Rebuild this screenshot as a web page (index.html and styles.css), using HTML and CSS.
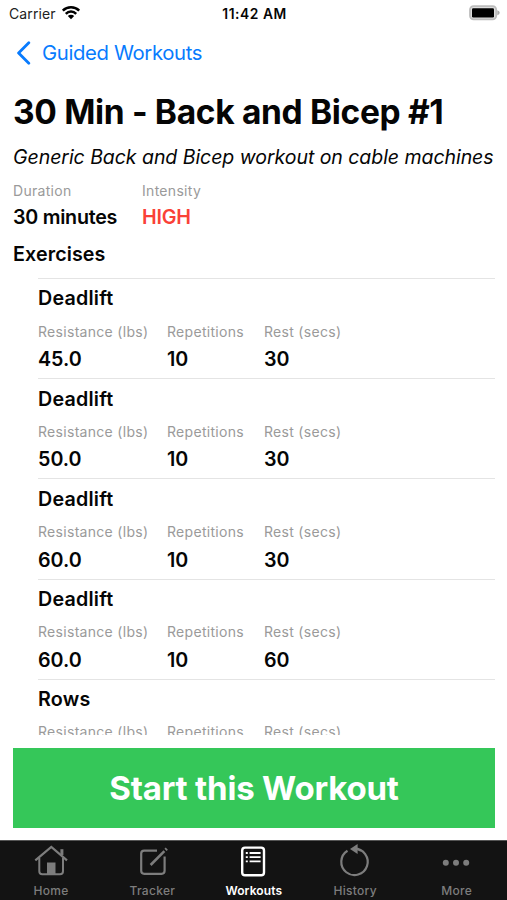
FILE: index.html
```html
<!DOCTYPE html>
<html lang="en">
<head>
<meta charset="utf-8">
<title>Guided Workouts</title>
<link rel="stylesheet" href="styles.css">
</head>
<body>
<div class="app">
  <header class="status">
    <div class="carrier"><span>Carrier</span>
      <svg width="20" height="15" viewBox="0 0 20 15"><g fill="none" stroke="#000" stroke-width="2.5"><path d="M1.8 5.6a11.6 11.6 0 0 1 16.4 0"/><path d="M4.8 8.8a7.3 7.3 0 0 1 10.4 0"/></g><path d="M10 14.2 6.8 11a4.5 4.5 0 0 1 6.4 0z"/></svg>
    </div>
    <div class="time">11:42 AM</div>
    <svg class="battery" width="31" height="16" viewBox="0 0 31 16"><rect x="1" y="1.2" width="26.2" height="13.2" rx="3.6" fill="#ddd" stroke="#bdbdbd" stroke-width="1.8"/><path d="M28.3 5.3q2.4.8 2.4 2.5t-2.4 2.5z" fill="#aaa"/><rect x="3" y="3.2" width="22" height="9.2" rx="1.2"/></svg>
  </header>
  <nav class="nav">
    <svg width="15" height="24" viewBox="0 0 15 24"><path d="M12.8 1.8 2.6 12l10.2 10.2" fill="none" stroke="#087bfe" stroke-width="2.8" stroke-linecap="round" stroke-linejoin="round"/></svg>
    <a class="back">Guided Workouts</a>
  </nav>
  <main class="content">
    <h1>30 Min - Back and Bicep #1</h1>
    <p class="subtitle">Generic Back and Bicep workout on cable machines</p>
    <div class="facts">
      <div class="duration"><div class="label">Duration</div><div class="value minutes">30 minutes</div></div>
      <div><div class="label">Intensity</div><div class="value high">HIGH</div></div>
    </div>
    <h2>Exercises</h2>
    <div class="list">
      <section class="exercise"><h3>Deadlift</h3><div class="stats">
        <div><div class="label">Resistance (lbs)</div><div class="value">45.0</div></div>
        <div><div class="label">Repetitions</div><div class="value">10</div></div>
        <div><div class="label">Rest (secs)</div><div class="value">30</div></div></div></section>
      <section class="exercise"><h3>Deadlift</h3><div class="stats">
        <div><div class="label">Resistance (lbs)</div><div class="value">50.0</div></div>
        <div><div class="label">Repetitions</div><div class="value">10</div></div>
        <div><div class="label">Rest (secs)</div><div class="value">30</div></div></div></section>
      <section class="exercise"><h3>Deadlift</h3><div class="stats">
        <div><div class="label">Resistance (lbs)</div><div class="value">60.0</div></div>
        <div><div class="label">Repetitions</div><div class="value">10</div></div>
        <div><div class="label">Rest (secs)</div><div class="value">30</div></div></div></section>
      <section class="exercise"><h3>Deadlift</h3><div class="stats">
        <div><div class="label">Resistance (lbs)</div><div class="value">60.0</div></div>
        <div><div class="label">Repetitions</div><div class="value">10</div></div>
        <div><div class="label">Rest (secs)</div><div class="value">60</div></div></div></section>
      <section class="exercise"><h3 class="rows">Rows</h3><div class="stats">
        <div><div class="label">Resistance (lbs)</div></div>
        <div><div class="label">Repetitions</div></div>
        <div><div class="label">Rest (secs)</div></div></div></section>
    </div>
  </main>
  <button class="start">Start this Workout</button>
  <footer class="tabs">
    <div class="tab"><svg width="36" height="36" viewBox="0 0 36 36"><g fill="none" stroke="#7d7d7d" stroke-width="2"><path d="M2.3 18.4 18.3 5 34 18.4" stroke-width="2.2"/><path d="M6.3 16v13.2q0 3 3 3H27q3 0 3-3V16"/><path d="M28.9 13V7.2" stroke-width="3"/></g><path d="M14 20.5h8.5V32H14z" fill="#7d7d7d"/></svg><span>Home</span></div>
    <div class="tab"><svg width="36" height="36" viewBox="0 0 36 36"><g fill="none" stroke="#7d7d7d" stroke-width="2.2"><path d="M23 8.6H10.2q-3 0-3 3v17.2q0 3 3 3h17.4q3 0 3-3V14.5"/><path d="m16.6 23 13.8-13.8" stroke-width="2.6"/><path d="m31.5 7.9 1.3-1.3" stroke-width="3"/></g></svg><span>Tracker</span></div>
    <div class="tab active"><svg width="36" height="36" viewBox="0 0 36 36"><rect x="7.2" y="5.6" width="21.8" height="27.6" rx="2.8" fill="none" stroke="#fff" stroke-width="2.4"/><g stroke="#fff" stroke-width="1.8"><path d="M10.8 11h2M10.8 15.2h2M10.8 19.4h2M14.6 11h11M14.6 15.2h11M14.6 19.4h11"/></g></svg><span>Workouts</span></div>
    <div class="tab"><svg width="36" height="36" viewBox="0 0 36 36"><path d="M10.5 8.7A13.2 13.2 0 1 0 17.3 6.7q3.6 0 6.8 2" fill="none" stroke="#7d7d7d" stroke-width="2.2"/><path d="M13 7 20.6 2v10z" fill="#7d7d7d"/></svg><span>History</span></div>
    <div class="tab"><svg width="36" height="36" viewBox="0 0 36 36"><g fill="#7d7d7d"><circle cx="7.8" cy="20.8" r="3"/><circle cx="18" cy="20.8" r="3"/><circle cx="28.2" cy="20.8" r="3"/></g></svg><span>More</span></div>
  </footer>
</div>
</body>
</html>
```
FILE: styles.css
```css
* { box-sizing: border-box; margin: 0; padding: 0; }
body { background: #fff; color: #050505; font-family: Inter, "Liberation Sans", sans-serif; }
.app { width: 507px; height: 900px; display: flex; flex-direction: column; overflow: hidden; white-space: nowrap; }
svg { display: block; flex: none; }

.status { height: 28px; display: grid; grid-template-columns: 1fr auto 1fr; align-items: center; padding: 0 7px 0 9px; font-size: 14px; }
.carrier { display: flex; align-items: center; gap: 5px; letter-spacing: 0.1px; color: #222; }
.carrier span { position: relative; top: -1px; }
.carrier svg { margin-top: -4px; }
.time { font-weight: 600; letter-spacing: 0.55px; font-size: 13.8px; }
.battery { justify-self: end; margin-top: -2px; }

.nav { height: 49px; display: flex; align-items: center; padding-left: 16px; gap: 11px; }
.back { color: #087bfe; font-size: 20.3px; letter-spacing: -0.35px; }

.content { height: 658px; padding: 0 12px 0 13px; overflow: hidden; }
h1 { font-size: 33.5px; line-height: 44px; margin-top: 13px; font-weight: 700; letter-spacing: -0.33px; }
.subtitle { font-size: 19.5px; line-height: 26px; margin-top: 10px; font-style: italic; letter-spacing: -0.05px; }
.facts { display: flex; margin-top: 11px; }
.duration { width: 129px; }
.label { font-size: 14px; line-height: 20px; color: #9a9a9a; letter-spacing: 0.3px; }
.value { font-size: 19.7px; line-height: 26px; margin-top: 4px; font-weight: 600; }
.facts .value { margin-top: 3px; letter-spacing: -0.25px; }
.high { color: #fa4137; }
h2 { font-size: 19.7px; line-height: 26px; margin-top: 11px; font-weight: 600; letter-spacing: 0.1px; }
h3 { font-size: 19.7px; line-height: 26px; font-weight: 600; letter-spacing: 0.2px; }
.list { margin: 11px 0 0 25px; }
.exercise { height: 100.2px; border-top: 1px solid #e4e4e4; padding-top: 6.4px; }
.stats { display: grid; grid-template-columns: 129px 97px auto; margin-top: 10.2px; }
.stats .value { margin-top: 4.6px; }

.start { margin: 13px 12px 0 13px; height: 80px; flex: none; border: 0; background: #35c759; color: #fff; font: 700 33px/80px Inter, "Liberation Sans", sans-serif; letter-spacing: -0.2px; }

.tabs { margin-top: 12px; height: 60px; flex: none; display: grid; grid-template-columns: repeat(5, 1fr); background: #131313; border-top: 1px solid #555; color: #7d7d7d; }
.tab { display: flex; flex-direction: column; align-items: center; padding-top: 1px; font-size: 12px; font-weight: 500; line-height: 16px; letter-spacing: 0.3px; }
.tab span { margin-top: 5px; padding-left: 0.6px; }
.active { color: #fff; font-weight: 600; letter-spacing: 0.1px; }
```
